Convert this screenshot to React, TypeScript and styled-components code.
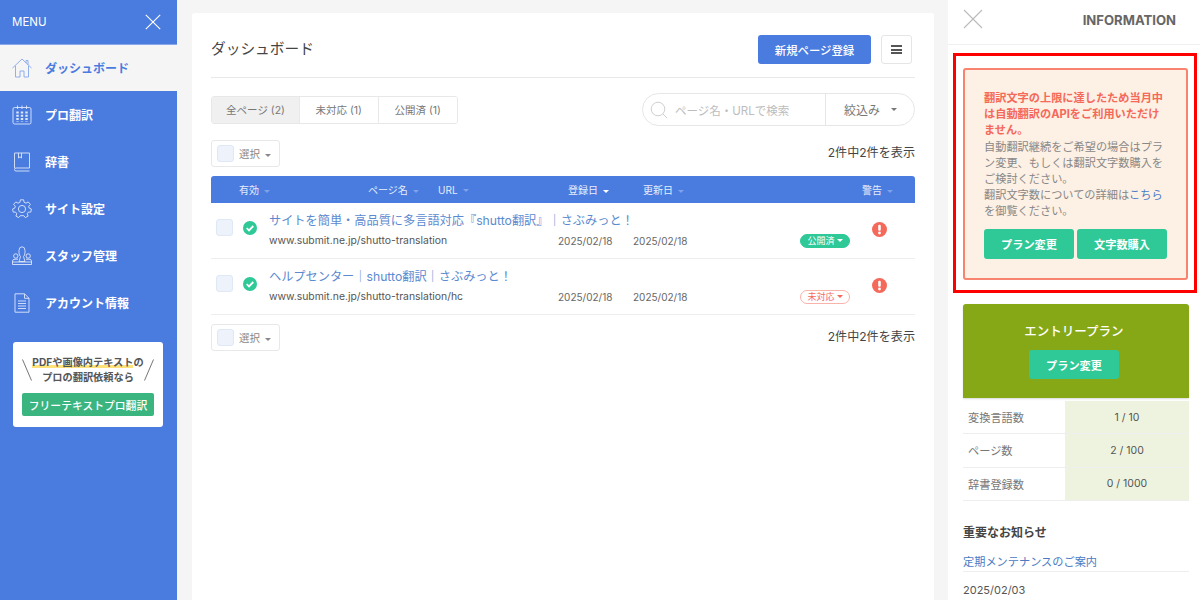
import React from 'react';
import styled, { createGlobalStyle } from 'styled-components';

const BLUE = '#4a7bdf';
const GREEN = '#2fc897';
const RED = '#f4695a';

const GlobalStyle = createGlobalStyle`
    html, body {
        margin: 0;
        height: 100%;
        overflow: hidden;
    }
    body {
        font-family: "Inter", "Noto Sans CJK JP", sans-serif;
        background: #f5f5f5;
        color: #444;
    }
    * {
        box-sizing: border-box;
    }
`;

const CloseIcon = ({ size, color, weight }: { size: number; color: string; weight: number }) => (
    <svg width={size} height={size} viewBox="0 0 20 20" fill="none" stroke={color} strokeWidth={weight}>
        <path d="M1 1 L19 19 M19 1 L1 19" />
    </svg>
);

const HomeIcon = () => (
    <svg width="20" height="20" viewBox="0 0 20 20" fill="none" stroke="currentColor" strokeWidth="0.9">
        <path d="M0.5 10 L10 1 L19.5 10 M3.5 8 V19 H8 V13 H12 V19 H16.5 V8 M14 5 V2.5 H16 V7" />
    </svg>
);

const CalendarIcon = () => (
    <svg width="20" height="20" viewBox="0 0 20 20" fill="none" stroke="currentColor" strokeWidth="0.9">
        <rect x="1" y="2.5" width="18" height="16.5" rx="1.5" />
        <path d="M5.5 0.5 V4 M10 0.5 V4 M14.5 0.5 V4" />
        <path d="M5.5 6.5 V16.5 M10 6.5 V16.5 M14.5 6.5 V16.5" strokeWidth="2.4" strokeDasharray="2 1.2" />
    </svg>
);

const BookIcon = () => (
    <svg width="20" height="20" viewBox="0 0 20 20" fill="none" stroke="currentColor" strokeWidth="0.9">
        <path d="M2.5 16 V1 H17.5 V16 H4 Q2.5 16 2.5 17.5 Q2.5 19 4 19 H17.5" />
        <path d="M6.5 1 V6 L8 4.8 L9.5 6 V1" />
    </svg>
);

const GearIcon = () => (
    <svg width="20" height="20" viewBox="0 0 20 20" fill="none" stroke="currentColor" strokeWidth="0.9">
        <circle cx="10" cy="10" r="3.6" />
        <path d="M8.4 0.8 H11.6 L12.1 3.3 L14 4.2 L16.2 2.9 L18.4 5.4 L16.7 7.2 L17.1 9 L19.4 10 L18.8 13.1 L16.4 13.1 L15.2 14.8 L16.1 17.1 L13.3 18.6 L11.8 16.7 H8.2 L6.7 18.6 L3.9 17.1 L4.8 14.8 L3.6 13.1 L1.2 13.1 L0.6 10 L2.9 9 L3.3 7.2 L1.6 5.4 L3.8 2.9 L6 4.2 L7.9 3.3 Z" strokeLinejoin="round" />
    </svg>
);

const StaffIcon = () => (
    <svg width="20" height="20" viewBox="0 0 20 20" fill="none" stroke="currentColor" strokeWidth="0.9">
        <path d="M7 4.5 Q7 0.8 10 0.8 Q13 0.8 13 4.5 V6.5 Q13 9.5 11.5 10.5 L13 15.5 H7 L8.5 10.5 Q7 9.5 7 6.5 Z" />
        <circle cx="3.8" cy="10" r="2.2" />
        <circle cx="16.2" cy="10" r="2.2" />
        <path d="M0.5 18.5 V15 Q0.5 13.2 3 13.2 H6 M19.5 18.5 V15 Q19.5 13.2 17 13.2 H14 M0.5 18.5 H19.5 M0.5 16 H19.5" />
    </svg>
);

const DocIcon = () => (
    <svg width="20" height="20" viewBox="0 0 20 20" fill="none" stroke="currentColor" strokeWidth="0.9">
        <path d="M3 0.8 H12.5 L17 5.3 V19.2 H3 Z M12.5 0.8 V5.3 H17" />
        <path d="M6 8 H14 M6 10.5 H14 M6 13 H14 M6 15.5 H14" />
    </svg>
);

const SearchIcon = () => (
    <svg width="18" height="18" viewBox="0 0 18 18" fill="none" stroke="#cfcfcf" strokeWidth="1">
        <circle cx="8" cy="8" r="6.8" />
        <path d="M13 13 L17 17" />
    </svg>
);

const CheckIcon = () => (
    <svg width="14" height="14" viewBox="0 0 14 14">
        <circle cx="7" cy="7" r="7" fill={GREEN} />
        <path d="M3.7 7.2 L6 9.4 L10.3 5" fill="none" stroke="#fff" strokeWidth="1.8" />
    </svg>
);

const AlertIcon = () => (
    <svg width="15" height="15" viewBox="0 0 15 15">
        <circle cx="7.5" cy="7.5" r="7.5" fill={RED} />
        <rect x="6.2" y="2.8" width="2.6" height="6" rx="1.2" fill="#fff" />
        <circle cx="7.5" cy="11" r="1.4" fill="#fff" />
    </svg>
);

const SlashLine = ({ flip }: { flip?: boolean }) => (
    <svg width="10" height="22" viewBox="0 0 10 22" fill="none" stroke="#666" strokeWidth="0.9">
        <path d={flip ? 'M9.5 0.5 L0.5 21.5' : 'M0.5 0.5 L9.5 21.5'} />
    </svg>
);

const navItems = [
    { label: 'ダッシュボード', Icon: HomeIcon, active: true },
    { label: 'プロ翻訳', Icon: CalendarIcon, active: false },
    { label: '辞書', Icon: BookIcon, active: false },
    { label: 'サイト設定', Icon: GearIcon, active: false },
    { label: 'スタッフ管理', Icon: StaffIcon, active: false },
    { label: 'アカウント情報', Icon: DocIcon, active: false },
];

const pages = [
    {
        title: 'サイトを簡単・高品質に多言語対応『shutto翻訳』｜さぶみっと！',
        url: 'www.submit.ne.jp/shutto-translation',
        status: '公開済',
        published: true,
    },
    {
        title: 'ヘルプセンター｜shutto翻訳｜さぶみっと！',
        url: 'www.submit.ne.jp/shutto-translation/hc',
        status: '未対応',
        published: false,
    },
];

const stats = [
    { label: '変換言語数', value: '1 / 10' },
    { label: 'ページ数', value: '2 / 100' },
    { label: '辞書登録数', value: '0 / 1000' },
];

function SelectBox() {
    return (
        <SelectButton>
            <CheckBox />
            <span>
                選択
                <Caret $color="#888" />
            </span>
        </SelectButton>
    );
}

export default function App() {
    return (
        <Page>
            <GlobalStyle />
            <Sidebar>
                <MenuHead>
                    MENU
                    <CloseIcon size={16} color="#fff" weight={1.4} />
                </MenuHead>
                {navItems.map(({ label, Icon, active }) => (
                    <NavItem key={label} $active={active}>
                        <Icon />
                        {label}
                    </NavItem>
                ))}
                <Banner>
                    <BannerCopy>
                        <SlashLine />
                        <div>
                            <Marked>PDFや画像内テキスト</Marked>の<br />
                            プロの翻訳依頼なら
                        </div>
                        <SlashLine flip />
                    </BannerCopy>
                    <BannerButton>フリーテキストプロ翻訳</BannerButton>
                </Banner>
            </Sidebar>

            <Main>
                <Card>
                    <TitleRow>
                        <Title>ダッシュボード</Title>
                        <PrimaryButton>新規ページ登録</PrimaryButton>
                        <IconButton>
                            <Bars />
                        </IconButton>
                    </TitleRow>

                    <FilterRow>
                        <Tabs>
                            <Tab $active>全ページ (2)</Tab>
                            <Tab>未対応 (1)</Tab>
                            <Tab>公開済 (1)</Tab>
                        </Tabs>
                        <Search>
                            <SearchField>
                                <SearchIcon />
                                ページ名・URLで検索
                            </SearchField>
                            <SearchFilter>
                                絞込み
                                <Caret $color="#777" />
                            </SearchFilter>
                        </Search>
                    </FilterRow>

                    <ListBar>
                        <SelectBox />
                        <Count>2件中2件を表示</Count>
                    </ListBar>

                    <TableHead>
                        <HeadCell $first>有効<Caret $color="#7fa2ea" /></HeadCell>
                        <HeadCell>ページ名<Caret $color="#7fa2ea" /></HeadCell>
                        <HeadCell>URL<Caret $color="#7fa2ea" /></HeadCell>
                        <HeadCell>登録日<Caret $color="#fff" /></HeadCell>
                        <HeadCell>更新日<Caret $color="#7fa2ea" /></HeadCell>
                        <HeadCell>警告<Caret $color="#7fa2ea" /></HeadCell>
                    </TableHead>

                    {pages.map(page => (
                        <Row key={page.url}>
                            <RowCheck>
                                <CheckBox />
                            </RowCheck>
                            <RowStatus>
                                <CheckIcon />
                            </RowStatus>
                            <PageTitle>{page.title}</PageTitle>
                            <PageUrl>{page.url}</PageUrl>
                            <DateCell>2025/02/18</DateCell>
                            <DateCell>2025/02/18</DateCell>
                            <BadgeCell>
                                <Badge $published={page.published}>
                                    {page.status}
                                    <Caret $color={page.published ? '#fff' : RED} $small />
                                </Badge>
                            </BadgeCell>
                            <RowAlert>
                                <AlertIcon />
                            </RowAlert>
                        </Row>
                    ))}

                    <BottomBar>
                        <SelectBox />
                        <Count>2件中2件を表示</Count>
                    </BottomBar>
                </Card>
            </Main>

            <Info>
                <InfoHead>
                    <CloseIcon size={20} color="#bbb" weight={1.1} />
                    <InfoTitle>INFORMATION</InfoTitle>
                </InfoHead>
                <Highlight>
                    <Notice>
                        <NoticeStrong>翻訳文字の上限に達したため当月中は自動翻訳のAPIをご利用いただけません。</NoticeStrong>
                        自動翻訳継続をご希望の場合はプラン変更、もしくは翻訳文字数購入をご検討ください。
                        <br />
                        翻訳文字数についての詳細は<NoticeLink>こちら</NoticeLink>を御覧ください。
                        <NoticeButtons>
                            <GreenButton>プラン変更</GreenButton>
                            <GreenButton>文字数購入</GreenButton>
                        </NoticeButtons>
                    </Notice>
                </Highlight>
                <InfoBody>
                    <Plan>
                        <PlanName>エントリープラン</PlanName>
                        <PlanButton>プラン変更</PlanButton>
                    </Plan>
                    <Stats>
                        {stats.map(stat => (
                            <StatRow key={stat.label}>
                                <StatLabel>{stat.label}</StatLabel>
                                <StatValue>{stat.value}</StatValue>
                            </StatRow>
                        ))}
                    </Stats>
                    <NewsTitle>重要なお知らせ</NewsTitle>
                    <NewsLink>定期メンテナンスのご案内</NewsLink>
                    <NewsDate>2025/02/03</NewsDate>
                </InfoBody>
            </Info>
        </Page>
    );
}


const Page = styled.div`
    display: flex;
    width: 1200px;
    height: 600px;
    overflow: hidden;
`;


const Sidebar = styled.aside`
    width: 177px;
    flex-shrink: 0;
    background: ${BLUE};
`;


const MenuHead = styled.div`
    height: 45px;
    padding: 0 16px 1px 12px;
    display: flex;
    align-items: center;
    justify-content: space-between;
    font-size: 11.5px;
    color: #fff;
    border-bottom: 1px solid #86a7ea;
`;


const NavItem = styled.div<{ $active: boolean }>`
    height: ${p => (p.$active ? '46px' : '47px')};
    padding: 0 0 ${p => (p.$active ? '1px' : '0')} 12px;
    display: flex;
    align-items: center;
    gap: 13px;
    font-size: 12px;
    font-weight: 700;
    background: ${p => (p.$active ? '#f5f5f5' : 'transparent')};
    color: ${p => (p.$active ? BLUE : '#fff')};

    svg {
        color: ${p => (p.$active ? '#86a7ea' : '#dfe8fa')};
    }
`;


const Banner = styled.div`
    width: 150px;
    height: 85px;
    margin: 16px 0 0 13px;
    padding: 13px 9px 0;
    background: #fff;
    border-radius: 3px;
`;


const BannerCopy = styled.div`
    display: flex;
    align-items: center;
    justify-content: space-between;
    font-size: 10.2px;
    font-weight: 700;
    line-height: 15px;
    color: #555;
    text-align: center;
    white-space: nowrap;
`;


const Marked = styled.span`
    background: linear-gradient(transparent 72%, #ffe27a 72%);
`;


const BannerButton = styled.div`
    height: 23px;
    margin-top: 8px;
    display: flex;
    align-items: center;
    justify-content: center;
    background: #3bb57f;
    border-radius: 2px;
    color: #fff;
    font-size: 10.8px;
    font-weight: 500;
    white-space: nowrap;
`;


const Main = styled.main`
    flex: 1;
    padding: 13px 14px 0 15px;
`;


const Card = styled.section`
    height: 600px;
    padding: 0 19px;
    background: #fff;
    border-radius: 3px;
`;


const TitleRow = styled.div`
    height: 65px;
    padding: 9px 3px 0 0;
    display: flex;
    align-items: center;
    border-bottom: 1px solid #e8e8e8;
`;


const Title = styled.h1`
    margin: 0 auto 0 0;
    padding-bottom: 4px;
    font-size: 14.7px;
    font-weight: 400;
    color: #444;
`;


const PrimaryButton = styled.button`
    width: 113px;
    height: 29px;
    padding: 0;
    border: none;
    border-radius: 3px;
    background: ${BLUE};
    color: #fff;
    font-family: inherit;
    font-size: 11.4px;
    font-weight: 500;
`;


const IconButton = styled.button`
    width: 31px;
    height: 29px;
    margin-left: 10px;
    padding: 0;
    display: flex;
    align-items: center;
    justify-content: center;
    background: #fff;
    border: 1px solid #e5e5e5;
    border-radius: 3px;
`;


const Bars = styled.span`
    width: 11px;
    height: 9px;
    border-top: 2px solid #555;
    border-bottom: 2px solid #555;
    position: relative;

    &::after {
        content: '';
        position: absolute;
        left: 0;
        right: 0;
        top: 1.5px;
        height: 2px;
        background: #555;
    }
`;


const FilterRow = styled.div`
    margin-top: 14px;
    height: 35px;
    display: flex;
    align-items: center;
    justify-content: space-between;
`;


const Tabs = styled.div`
    height: 28px;
    display: flex;
    border: 1px solid #e8e8e8;
    border-radius: 3px;
    overflow: hidden;
`;


const Tab = styled.div<{ $active?: boolean }>`
    width: ${p => (p.$active ? '88px' : '78.5px')};
    display: flex;
    align-items: center;
    justify-content: center;
    font-size: 10.5px;
    color: #777;
    background: ${p => (p.$active ? '#f0f0f0' : '#fff')};
    border-right: 1px solid #e8e8e8;

    &:last-child {
        border-right: none;
    }
`;


const Search = styled.div`
    width: 273px;
    height: 33px;
    display: flex;
    border: 1px solid #e6e6e6;
    border-radius: 17px;
`;


const SearchField = styled.div`
    width: 183px;
    padding-left: 7px;
    display: flex;
    align-items: center;
    gap: 7px;
    font-size: 11.5px;
    color: #bdbdbd;
    border-right: 1px solid #e6e6e6;
`;


const SearchFilter = styled.div`
    flex: 1;
    padding-left: 18px;
    display: flex;
    align-items: center;
    gap: 6px;
    font-size: 12px;
    color: #777;
`;


const Caret = styled.span<{ $color: string; $small?: boolean }>`
    display: inline-block;
    margin-left: ${p => (p.$small ? '2px' : '5px')};
    border-style: solid;
    border-width: 3px 3px 0;
    border-color: ${p => p.$color} transparent transparent;
    vertical-align: middle;
`;


const ListBar = styled.div`
    margin-top: 13px;
    height: 27px;
    display: flex;
    align-items: center;
    justify-content: space-between;
`;


const BottomBar = styled(ListBar)`
    margin-top: 9px;
`;


const SelectButton = styled.div`
    width: 69px;
    height: 27px;
    padding-left: 5px;
    display: flex;
    align-items: center;
    gap: 5px;
    font-size: 10.5px;
    color: #888;
    border: 1px solid #e8e8e8;
    border-radius: 3px;
`;


const CheckBox = styled.span`
    width: 17px;
    height: 17px;
    flex-shrink: 0;
    background: #edf2fb;
    border: 1px solid #e0e8f6;
    border-radius: 3px;
`;


const Count = styled.div`
    padding-bottom: 5px;
    font-size: 12.1px;
    color: #444;
`;


const TableHead = styled.div`
    margin-top: 9px;
    height: 27px;
    display: grid;
    grid-template-columns: 157px 70px 130px 75px 219px 1fr;
    align-items: center;
    background: ${BLUE};
    border-radius: 3px 3px 0 0;
`;


const HeadCell = styled.div<{ $first?: boolean }>`
    padding-left: ${p => (p.$first ? '28px' : '0')};
    font-size: 10px;
    color: #e6edfb;
    white-space: nowrap;
`;


const Row = styled.div`
    height: 56px;
    display: grid;
    grid-template-columns: 32px 26px 289px 75px 167px 72px 1fr;
    grid-template-rows: 27.5px 20px;
    align-content: start;
    align-items: center;
    border-bottom: 1px solid #eeeeee;
`;


const RowCheck = styled.div`
    grid-row: 1 / 3;
    padding: 2px 0 0 5px;
    display: flex;
`;


const RowStatus = styled.div`
    grid-row: 1 / 3;
    padding-top: 2px;
    display: flex;
`;


const PageTitle = styled.a`
    grid-column: 3 / 8;
    grid-row: 1;
    align-self: end;
    padding-bottom: 2px;
    font-size: 12.2px;
    color: #5b8ad0;
    white-space: nowrap;
`;


const PageUrl = styled.div`
    grid-column: 3;
    grid-row: 2;
    font-size: 10.4px;
    color: #555;
`;


const DateCell = styled.div`
    grid-row: 2;
    font-size: 10px;
    color: #666;
`;


const BadgeCell = styled.div`
    grid-row: 2;
    display: flex;
`;


const Badge = styled.div<{ $published: boolean }>`
    width: 50px;
    height: 14px;
    display: flex;
    align-items: center;
    justify-content: center;
    border-radius: 7px;
    font-size: 9px;
    background: ${p => (p.$published ? GREEN : '#fff')};
    color: ${p => (p.$published ? '#fff' : RED)};
    border: 1px solid ${p => (p.$published ? GREEN : '#f9b3aa')};
`;


const RowAlert = styled.div`
    grid-column: 7;
    grid-row: 1 / 3;
    padding-top: 6px;
    display: flex;
`;


const Info = styled.aside`
    width: 252px;
    flex-shrink: 0;
    background: #fff;
`;


const InfoHead = styled.div`
    height: 45px;
    padding: 0 24px 6px 15px;
    display: flex;
    align-items: center;
    justify-content: space-between;
    border-bottom: 1px solid #f0f0f0;
`;


const InfoTitle = styled.div`
    padding-top: 2px;
    font-size: 13.1px;
    font-weight: 700;
    color: #666;
`;


const Highlight = styled.div`
    width: 244px;
    height: 240px;
    margin: 8px 0 0 5px;
    padding: 12px 6px 10px 7px;
    border: 3px solid #ff0000;
    background: #fff;
`;


const Notice = styled.div`
    height: 100%;
    padding: 20px 19px 0;
    background: #fdf0e4;
    border: 2px solid #f8836f;
    border-radius: 3px;
    font-size: 11.2px;
    line-height: 16.2px;
    color: #888;
`;


const NoticeStrong = styled.div`
    font-weight: 700;
    color: ${RED};
`;


const NoticeLink = styled.a`
    color: #4a7bc4;
`;


const NoticeButtons = styled.div`
    margin-top: 9px;
    display: flex;
    gap: 3px;
`;


const GreenButton = styled.button`
    width: 90px;
    height: 30px;
    padding: 0;
    border: none;
    border-radius: 3px;
    background: ${GREEN};
    color: #fff;
    font-family: inherit;
    font-size: 11.2px;
    font-weight: 700;
`;


const InfoBody = styled.div`
    padding: 11px 11px 0 15px;
`;


const Plan = styled.div`
    height: 94px;
    padding: 19px 4px 0 0;
    display: flex;
    flex-direction: column;
    align-items: center;
    gap: 10px;
    background: #86a817;
    border-radius: 3px 3px 0 0;
    box-shadow: 0 1px 2px rgba(0, 0, 0, 0.15);
`;


const PlanName = styled.div`
    font-size: 12.5px;
    font-weight: 500;
    line-height: 17px;
    color: #fff;
`;


const PlanButton = styled(GreenButton)`
    height: 29px;
`;


const Stats = styled.div`
    margin-top: 3px;
`;


const StatRow = styled.div`
    height: 33.3px;
    display: grid;
    grid-template-columns: 102px 1fr;
    border-bottom: 1px solid #eeeeee;
`;


const StatLabel = styled.div`
    padding-left: 5px;
    display: flex;
    align-items: center;
    font-size: 11.2px;
    color: #777;
`;


const StatValue = styled.div`
    display: flex;
    align-items: center;
    justify-content: center;
    background: #eef3df;
    font-size: 10.5px;
    color: #555;
`;


const NewsTitle = styled.div`
    margin-top: 23px;
    font-size: 12px;
    font-weight: 700;
    line-height: 18px;
    color: #444;
`;


const NewsLink = styled.a`
    display: block;
    margin-top: 12px;
    padding-bottom: 1px;
    font-size: 11.2px;
    line-height: 16px;
    color: #4a7bc4;
    border-bottom: 1px solid #eeeeee;
`;


const NewsDate = styled.div`
    margin-top: 10px;
    font-size: 11px;
    line-height: 16px;
    color: #555;
`;
